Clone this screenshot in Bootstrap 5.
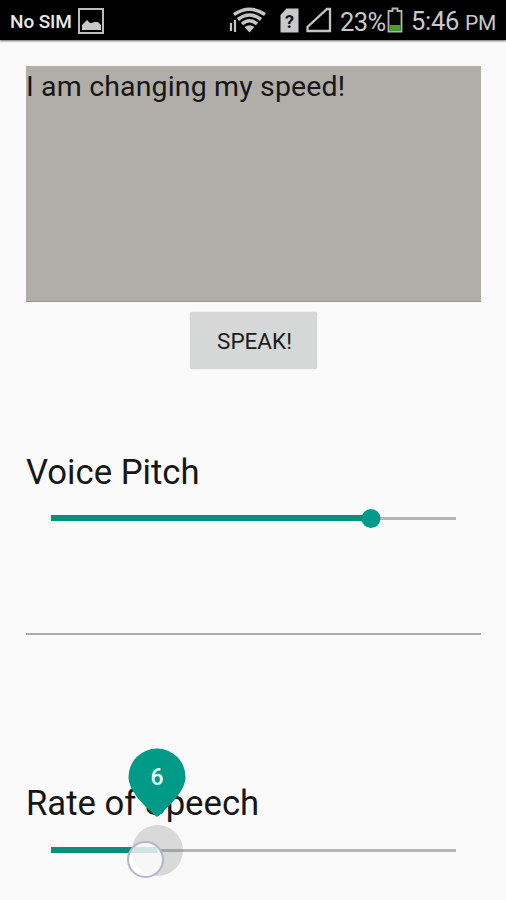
<!DOCTYPE html>
<html lang="en">
<head>
<meta charset="utf-8">
<meta name="viewport" content="width=device-width, initial-scale=1">
<title>Text to Speech</title>
<link href="https://cdn.jsdelivr.net/npm/bootstrap@5.3.0/dist/css/bootstrap.min.css" rel="stylesheet">
<style>
body{font-family:Roboto,"Liberation Sans",sans-serif;background:#fafafa;color:#161616;height:900px;overflow:hidden}
.status{height:40px;background:#000;color:#c9c9c9;box-shadow:0 1px 2px rgba(0,0,0,.6);white-space:nowrap}
.status svg{display:block;flex:none}
.carrier{font-size:19px;font-weight:500;color:#e8e8e8;width:67px;line-height:40px;padding-top:3px;margin-left:10px;letter-spacing:-.1px}
.clock{font-size:25.5px;line-height:40px;padding-top:3px}
.clock small{font-size:21px}
.pct{width:46px;letter-spacing:-.6px}
.time{width:94px;padding-left:7px;letter-spacing:-.3px}
.content{padding:26px 25px 0 26px}
.speech-input{height:236px;background:#b1aeaa;border:0;border-bottom:1px solid #96938f;border-radius:0;padding:3px 0 0;font-size:28.5px;letter-spacing:.15px;line-height:36px;color:#161616;resize:none;display:block;width:100%;overflow:hidden}
.speak{width:127px;height:57px;margin-top:10px;background:#d6d8d7;border:0;border-radius:3px;font-size:22.5px;line-height:59px;padding:0 0 0 2px;color:#1c1c1c;box-shadow:0 0 1px rgba(0,0,0,.3)}
.title{font-size:34.7px;line-height:40px;font-weight:400;margin:0}
.pitch{margin-top:83px}
.rate{margin-top:148px}
.slider{height:20px;margin:16px 25px 0;position:relative}
.rate + .slider{margin-top:17px}
.track{height:3px;background:#b5b5b5;width:100%}
.fill{height:6px;background:#0a8e7c;position:absolute;left:0;top:7px}
.thumb{width:19px;height:19px;background:#009a88;border-radius:50%;position:absolute;top:.5px;transform:translateX(-50%)}
.rule{height:2px;background:#aaa;margin-top:105px}
.bubble{position:absolute;left:77px;top:-92px;width:58px;height:70px}
.halo{position:absolute;left:81px;top:-15px;width:51px;height:51px;border-radius:50%;background:rgba(120,120,120,.25)}
.touch{position:absolute;left:76px;top:1px;width:37px;height:37px;border-radius:50%;background:rgba(255,255,255,.78);border:2px solid #b3b6cc}
</style>
</head>
<body>
<header class="status d-flex align-items-center">
  <span class="carrier">No SIM</span>
  <svg width="28" height="40" viewBox="0 0 28 40"><path d="M2 9h24v24H2z" fill="none" stroke="#bcbcbc" stroke-width="2"/><path d="M5 30v-5l3-3 2-2 3 3h2l2-1h4l3 3v5z" fill="#c8c8c8"/></svg>
  <div class="d-flex align-items-center ms-auto me-2">
    <svg width="112" height="40" viewBox="228 0 112 40"><g fill="none" stroke="#c4c4c4"><path d="M234 14.500Q249.500 4 265 14.500M238 19.500Q249.500 10.500 261 19.500M242 24Q249.500 17.500 257 24" stroke-width="3.500"/><path d="M231 23v8M235 20v12" stroke-width="2.200"/></g><path d="M244.500 27q5-3.500 10 0l-5 5.500z" fill="#c4c4c4"/><path d="M280.500 15l6-6.500h12V32.500h-18z" fill="#c8c8c8"/><text x="289.500" y="28" text-anchor="middle" font-size="18" font-weight="700" fill="#111">?</text><path d="M307.500 31V27L327 9h3V31z" fill="none" stroke="#c4c4c4" stroke-width="2.300"/></svg>
    <span class="clock pct">23%</span>
    <svg width="18" height="40" viewBox="-1 0 18 40"><path d="M1.500 11h4V8.500h5V11h4v20.500h-13z" fill="#080808" stroke="#b5b5b5" stroke-width="1.800"/><path d="M2.500 25h11v5.500h-11z" fill="#43a51f"/></svg>
    <span class="clock time">5:46 <small>PM</small></span>
  </div>
</header>
<main class="content">
  <textarea class="speech-input" spellcheck="false">I am changing my speed!</textarea>
  <div class="d-flex justify-content-center"><button class="btn speak" type="button">SPEAK!</button></div>
  <h2 class="title pitch">Voice Pitch</h2>
  <div class="slider d-flex align-items-center"><div class="track"></div><div class="fill" style="width:319px"></div><div class="thumb" style="left:319.5px"></div></div>
  <div class="rule"></div>
  <h2 class="title rate">Rate of Speech</h2>
  <div class="slider d-flex align-items-center"><div class="track"></div><div class="fill" style="width:106px"></div><div class="halo"></div><div class="touch"></div>
    <svg class="bubble" viewBox="0 0 58 70"><path d="M29 69l-5-4C14 55 .5 42 .5 29a28.500 28.500 0 0 1 57 0C57.500 42 44 55 34 65z" fill="#009a88"/><text x="29" y="37" text-anchor="middle" font-size="23" font-weight="500" fill="#e8fffa">6</text></svg>
  </div>
</main>
<script src="https://cdn.jsdelivr.net/npm/bootstrap@5.3.0/dist/js/bootstrap.bundle.min.js"></script>
</body>
</html>
